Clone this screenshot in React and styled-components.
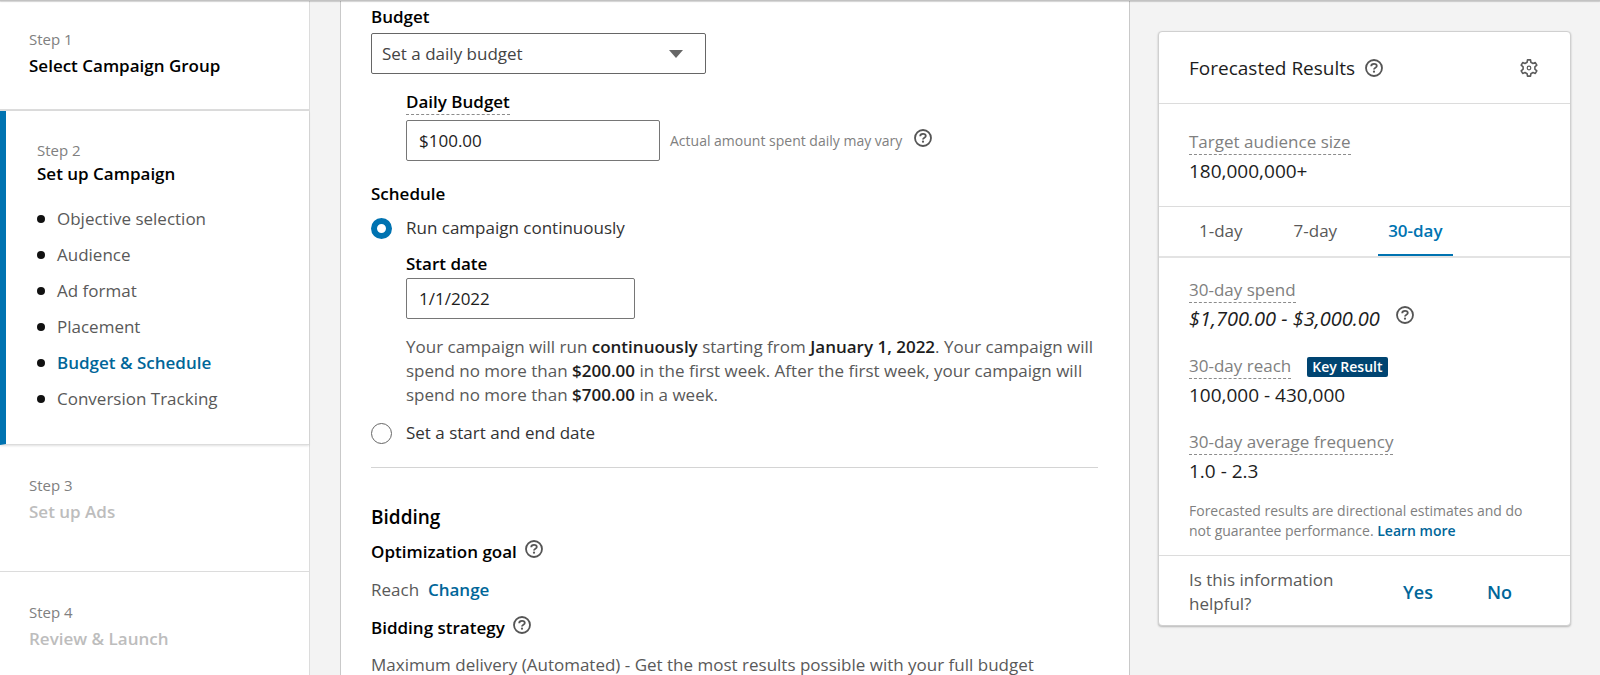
import React, { useState } from 'react';
import styled, { css, createGlobalStyle } from 'styled-components';

const colors = {
  blue: '#0073b1',
  link: '#006699',
  navy: '#004471',
  text: '#1d1d1d',
  body: '#595959',
  muted: '#808080',
  disabled: '#bdbdbd',
  line: '#dcdcdc',
};

const GlobalStyle = createGlobalStyle`
  * { box-sizing: border-box; }
  body {
    margin: 0;
    background: #f3f3f3;
    color: ${colors.text};
    font-family: "Open Sans", "Noto Sans", sans-serif;
    font-size: 17px;
    line-height: 24px;
  }
  h2, h3, p, ul, dl, dd { margin: 0; padding: 0; font-size: inherit; font-weight: inherit; }
  button, input, select { font: inherit; color: inherit; }
`;

const Page = styled.div`
  display: flex;
  flex-direction: column;
  height: 100vh;
  overflow: hidden;
`;

const TopEdge = styled.div`
  flex: none;
  height: 1px;
  position: relative;
  z-index: 1;
  background: #c2c2c2;
  box-shadow: 0 1px 1px rgba(0, 0, 0, 0.2);
`;

const Columns = styled.div`
  display: flex;
  flex: 1;
  min-height: 0;
`;

const Sidebar = styled.nav`
  flex: none;
  width: 310px;
  background: #fff;
  border-right: 1px solid ${colors.line};
`;

const Step = styled.section`
  height: 127px;
  padding: 28px 29px 0;
  border-bottom: 1px solid ${colors.line};
  ${(props) => props.first && css`
    height: 110px;
    padding-top: 26px;
    border-bottom-width: 2px;
  `}
  ${(props) => props.active && css`
    height: auto;
    padding: 27px 31px 27px;
    border-left: 6px solid ${colors.blue};
    box-shadow: 0 1px 2px rgba(0, 0, 0, 0.12);
  `}
`;

const StepNumber = styled.div`
  font-size: 15px;
  color: ${colors.muted};
`;

const StepTitle = styled.h2`
  margin-top: ${(props) => (props.tight ? 0 : 3)}px;
  font-weight: 600;
  color: ${(props) => (props.disabled ? colors.disabled : '#000')};
`;

const SubSteps = styled.ul`
  margin-top: 15px;
  list-style: none;
`;

const SubStep = styled.li`
  display: flex;
  align-items: center;
  gap: 12px;
  height: 36px;
  &::before {
    content: '';
    width: 8px;
    height: 8px;
    border-radius: 50%;
    background: #111;
  }
`;

const SubStepLink = styled.a`
  color: ${(props) => (props.current ? colors.link : colors.body)};
  font-weight: ${(props) => (props.current ? 600 : 400)};
  text-decoration: none;
`;

const Main = styled.main`
  flex: 1;
  min-width: 0;
  margin: 0 28px 0 30px;
  padding: 4px 31px 0 30px;
  background: #fff;
  border: 1px solid #c9c9c9;
  border-width: 0 1px;
`;

const Label = styled.label`
  display: block;
  font-weight: 600;
  color: #000;
`;

const Heading = styled.h3`
  display: flex;
  gap: 8px;
  margin-top: ${(props) => props.gap}px;
  font-weight: 600;
  color: #000;
`;

const SectionTitle = styled.h2`
  margin-top: 35px;
  font-size: 19px;
  line-height: 28px;
  font-weight: 600;
  color: #000;
`;

const SelectWrap = styled.div`
  display: grid;
  align-items: center;
  width: 335px;
  margin-top: 4px;
  & > * { grid-area: 1 / 1; }
`;

const Select = styled.select`
  appearance: none;
  height: 41px;
  padding: 0 10px;
  border: 1px solid #666;
  border-radius: 2px;
  background: #fff;
  color: #444;
`;

const Caret = styled.span`
  justify-self: end;
  margin-right: 23px;
  border: 7px solid transparent;
  border-top: 8px solid #666;
  border-bottom: 0;
  pointer-events: none;
`;

const Indent = styled.div`
  margin: ${(props) => props.gap}px 0 0 35px;
`;

const Hint = styled.span`
  display: inline-block;
  vertical-align: top;
  border-bottom: 1px dashed #8c8c8c;
`;

const InputRow = styled.div`
  display: flex;
  align-items: center;
  gap: 10px;
  margin-top: ${(props) => props.gap}px;
`;

const Input = styled.input`
  width: ${(props) => props.$width}px;
  height: 41px;
  padding: 0 12px;
  border: 1px solid #767676;
  border-radius: 2px;
  background: #fff;
`;

const Note = styled.span`
  display: flex;
  gap: 12px;
  font-size: 14px;
  color: ${colors.muted};
`;

const RadioRow = styled.label`
  display: flex;
  align-items: center;
  gap: 14px;
  margin-top: ${(props) => props.gap}px;
  color: #333;
`;

const Radio = styled.input`
  appearance: none;
  width: 21px;
  height: 21px;
  margin: 0;
  border: 1px solid #666;
  border-radius: 50%;
  &:checked { border: 6px solid ${colors.blue}; }
`;

const Summary = styled.p`
  margin-top: 16px;
  color: ${colors.body};
  strong { font-weight: 600; color: ${colors.text}; }
`;

const Divider = styled.hr`
  height: 1px;
  margin: 22px 0 0;
  border: 0;
  background: #d4d4d4;
`;

const Value = styled.p`
  margin-top: ${(props) => props.gap}px;
  color: ${colors.body};
`;

const TextButton = styled.button`
  padding: 0;
  border: 0;
  background: none;
  font-size: ${(props) => (props.large ? 18 : 17)}px;
  font-weight: 600;
  color: ${colors.link};
`;

const IconButton = styled.button`
  display: flex;
  flex: none;
  height: 18px;
  padding: 0;
  border: 0;
  background: none;
`;

const Forecast = styled.aside`
  flex: none;
  align-self: flex-start;
  width: 413px;
  margin: 30px 29px 0 0;
  background: #fff;
  border: 1px solid #d0d0d0;
  border-radius: 4px;
  box-shadow: 0 1px 2px rgba(0, 0, 0, 0.25);
`;

const ForecastHeader = styled.header`
  display: flex;
  align-items: center;
  justify-content: space-between;
  height: 72px;
  padding: 0 32px 0 30px;
  border-bottom: 1px solid ${colors.line};
`;

const ForecastTitle = styled.h2`
  display: flex;
  align-items: center;
  gap: 10px;
  font-size: 19px;
  line-height: 28px;
`;

const Audience = styled.dl`
  padding: 26px 30px 22px;
  border-bottom: 1px solid ${colors.line};
`;

const Term = styled.dt`
  display: flex;
  align-items: center;
  gap: 16px;
  color: ${colors.muted};
`;

const Amount = styled.dd`
  display: flex;
  gap: 16px;
  margin-top: 3px;
  font-size: 19px;
  line-height: 26px;
  ${(props) => props.estimate && css`
    font-size: 20px;
    font-style: italic;
  `}
`;

const Tabs = styled.div`
  display: flex;
  gap: 31px;
  height: 51px;
  padding: 0 30px;
  border-bottom: 2px solid #e3e3e3;
`;

const Tab = styled.button`
  padding: 0 10px;
  border: 0;
  border-bottom: 2px solid transparent;
  background: none;
  color: ${colors.body};
  ${(props) => props.selected && css`
    color: ${colors.blue};
    border-color: ${colors.blue};
    font-weight: 600;
  `}
`;

const Results = styled.div`
  padding: 20px 30px 14px;
  border-bottom: 1px solid ${colors.line};
`;

const Metric = styled.dl`
  margin-bottom: 22px;
  &:last-of-type { margin-bottom: 17px; }
`;

const Disclaimer = styled.p`
  font-size: 14px;
  line-height: 20px;
  color: ${colors.muted};
  a { color: ${colors.link}; font-weight: 600; text-decoration: none; }
`;

const Badge = styled.span`
  padding: 0 5px;
  border-radius: 2px;
  background: ${colors.navy};
  color: #fff;
  font-size: 14px;
  line-height: 20px;
  font-weight: 600;
`;

const Feedback = styled.footer`
  display: flex;
  align-items: center;
  padding: 12px 58px 9px 30px;
  color: ${colors.body};
  p { flex: 1; padding-right: 64px; }
`;

const Answers = styled.div`
  display: flex;
  gap: 54px;
`;

const Help = ({ about }) => (
  <IconButton type="button" aria-label={`Help: ${about}`}>
    <svg width="18" height="18" viewBox="0 0 18 18" fill="none" stroke="#555">
      <circle cx="9" cy="9" r="8" strokeWidth="1.8" />
      <path d="M6.2 7.2C6.2 5.6 7.4 4.8 9 4.8s2.8.8 2.8 2.2c0 1.9-2.8 1.7-2.8 3.6" strokeWidth="1.8" />
      <circle cx="9" cy="12.7" r="1.1" fill="#555" stroke="none" />
    </svg>
  </IconButton>
);

const Gear = () => (
  <svg width="18" height="18" viewBox="0 0 18 18" fill="none" stroke="#5c5c5c" strokeWidth="1.6" strokeLinejoin="round">
    <path d="M7.1 3.3l.4-2.4h3l.4 2.4L13 4.5l2.3-.9 1.5 2.6-1.9 1.6v2.4l1.9 1.6-1.5 2.6-2.3-.9-2.1 1.2-.4 2.4h-3l-.4-2.4L5 13.500l-2.300.9-1.500-2.600 1.900-1.600V7.800L1.200 6.200l1.500-2.600 2.300.9z" />
    <circle cx="9" cy="9" r="1.8" strokeWidth="1.2" />
  </svg>
);

const subSteps = [
  'Objective selection', 'Audience', 'Ad format', 'Placement', 'Budget & Schedule', 'Conversion Tracking',
];
const ranges = ['1-day', '7-day', '30-day'];

const App = () => {
  const [range, setRange] = useState('30-day');
  const [schedule, setSchedule] = useState('continuous');

  function renderRadio(value, text, gap) {
    return (
      <RadioRow gap={gap}>
        <Radio type="radio" name="schedule" checked={schedule === value} onChange={() => setSchedule(value)} />
        {text}
      </RadioRow>
    );
  }

  return (
    <Page>
      <GlobalStyle />
      <TopEdge />
      <Columns>
        <Sidebar>
          <Step first>
            <StepNumber>Step 1</StepNumber>
            <StepTitle>Select Campaign Group</StepTitle>
          </Step>
          <Step active>
            <StepNumber>Step 2</StepNumber>
            <StepTitle tight>Set up Campaign</StepTitle>
            <SubSteps>
              {subSteps.map((name) => (
                <SubStep key={name}>
                  <SubStepLink href="#" current={name === 'Budget & Schedule' ? 1 : 0}>{name}</SubStepLink>
                </SubStep>
              ))}
            </SubSteps>
          </Step>
          <Step>
            <StepNumber>Step 3</StepNumber>
            <StepTitle disabled>Set up Ads</StepTitle>
          </Step>
          <Step>
            <StepNumber>Step 4</StepNumber>
            <StepTitle disabled>Review &amp; Launch</StepTitle>
          </Step>
        </Sidebar>

        <Main>
          <Label htmlFor="budget">Budget</Label>
          <SelectWrap>
            <Select id="budget">
              <option>Set a daily budget</option>
            </Select>
            <Caret />
          </SelectWrap>
          <Indent gap={16}>
            <Label htmlFor="daily"><Hint>Daily Budget</Hint></Label>
            <InputRow gap={5}>
              <Input id="daily" $width={254} defaultValue="$100.00" />
              <Note>Actual amount spent daily may vary <Help about="daily spend" /></Note>
            </InputRow>
          </Indent>

          <Heading gap={21}>Schedule</Heading>
          {renderRadio('continuous', 'Run campaign continuously', 10)}
          <Indent gap={12}>
            <Label htmlFor="start">Start date</Label>
            <InputRow gap={2}>
              <Input id="start" $width={229} defaultValue="1/1/2022" />
            </InputRow>
            <Summary>
              Your campaign will run <strong>continuously</strong> starting from <strong>January 1, 2022</strong>.
              {' '}Your campaign will spend no more than <strong>$200.00</strong> in the first week. After the first
              {' '}week, your campaign will spend no more than <strong>$700.00</strong> in a week.
            </Summary>
          </Indent>
          {renderRadio('range', 'Set a start and end date', 14)}
          <Divider />

          <SectionTitle>Bidding</SectionTitle>
          <Heading gap={9}>Optimization goal <Help about="optimization goal" /></Heading>
          <Value gap={14}>Reach &nbsp;<TextButton type="button">Change</TextButton></Value>
          <Heading gap={14}>Bidding strategy <Help about="bidding strategy" /></Heading>
          <Value gap={13}>Maximum delivery (Automated) - Get the most results possible with your full budget</Value>
        </Main>

        <Forecast>
          <ForecastHeader>
            <ForecastTitle>Forecasted Results <Help about="forecasted results" /></ForecastTitle>
            <IconButton type="button" aria-label="Settings"><Gear /></IconButton>
          </ForecastHeader>
          <Audience>
            <Term><Hint>Target audience size</Hint></Term>
            <Amount>180,000,000+</Amount>
          </Audience>
          <Tabs role="tablist">
            {ranges.map((name) => (
              <Tab
                key={name}
                type="button"
                role="tab"
                aria-selected={range === name}
                selected={range === name}
                onClick={() => setRange(name)}
              >
                {name}
              </Tab>
            ))}
          </Tabs>
          <Results>
            <Metric>
              <Term><Hint>30-day spend</Hint></Term>
              <Amount estimate="true">$1,700.00 - $3,000.00 <Help about="spend" /></Amount>
            </Metric>
            <Metric>
              <Term><Hint>30-day reach</Hint><Badge>Key Result</Badge></Term>
              <Amount>100,000 - 430,000</Amount>
            </Metric>
            <Metric>
              <Term><Hint>30-day average frequency</Hint></Term>
              <Amount>1.0 - 2.3</Amount>
            </Metric>
            <Disclaimer>
              Forecasted results are directional estimates and do not guarantee performance. <a href="#">Learn more</a>
            </Disclaimer>
          </Results>
          <Feedback>
            <p>Is this information helpful?</p>
            <Answers>
              <TextButton type="button" large>Yes</TextButton>
              <TextButton type="button" large>No</TextButton>
            </Answers>
          </Feedback>
        </Forecast>
      </Columns>
    </Page>
  );
};

export default App;
